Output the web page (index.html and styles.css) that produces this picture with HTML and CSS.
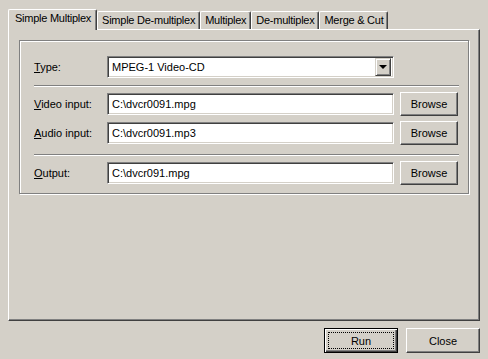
FILE: index.html
```html
<!DOCTYPE html>
<html lang="en">
<head>
  <meta charset="UTF-8">
  <title>Simple Multiplex</title>
  <link rel="stylesheet" href="styles.css">
</head>
<body>
  <div class="dialog">
    <div class="tabs">
      <div class="tab active">Simple Multiplex</div>
      <div class="tab">Simple De-multiplex</div>
      <div class="tab">Multiplex</div>
      <div class="tab">De-multiplex</div>
      <div class="tab">Merge &amp; Cut</div>
    </div>

    <div class="panel">
      <div class="group">
        <div class="row">
          <label class="label"><u>T</u>ype:</label>
          <div class="combo">
            <span class="combo-text">MPEG-1 Video-CD</span>
            <span class="combo-btn"><span class="arrow"></span></span>
          </div>
        </div>

        <div class="separator sep-top"></div>

        <div class="row">
          <label class="label"><u>V</u>ideo input:</label>
          <div class="field">C:\dvcr0091.mpg</div>
          <button class="btn browse">Browse</button>
        </div>
        <div class="row row-gap">
          <label class="label"><u>A</u>udio input:</label>
          <div class="field">C:\dvcr0091.mp3</div>
          <button class="btn browse">Browse</button>
        </div>

        <div class="separator sep-mid"></div>

        <div class="row">
          <label class="label"><u>O</u>utput:</label>
          <div class="field">C:\dvcr091.mpg</div>
          <button class="btn browse">Browse</button>
        </div>
      </div>
    </div>

    <div class="footer">
      <button class="btn default"><span class="focus">Run</span></button>
      <button class="btn">Close</button>
    </div>
  </div>
</body>
</html>
```

FILE: styles.css
```css
:root {
  --face: #d4d0c8;
  --shadow: #808080;
  --dark: #404040;
  --light: #fff;
}

* {
  box-sizing: border-box;
}

body {
  margin: 0;
  width: 488px;
  height: 359px;
  background-color: var(--face);
  font-family: "Liberation Sans", Arial, sans-serif;
  font-size: 11px;
  color: #000;
  overflow: hidden;
}

.dialog {
  padding: 9px 8px 0 8px;
}

/* Tabs */
.tabs {
  display: flex;
  align-items: flex-end;
  height: 20px;
}

.tab {
  position: relative;
  height: 18px;
  padding: 2px 4px 0 4px;
  border-top: 1px solid var(--light);
  border-left: 1px solid var(--light);
  border-right: 1px solid var(--dark);
  border-radius: 2px 2px 0 0;
  box-shadow: inset -1px 0 0 var(--shadow);
  letter-spacing: -0.25px;
  white-space: nowrap;
}

.tab.active {
  height: 21px;
  margin-bottom: -1px;
  padding: 2px 5px 0 6px;
  background-color: var(--face);
  z-index: 1;
}

/* Tab page */
.panel {
  height: 292px;
  padding: 10px 10px 0 10px;
  border: 1px solid;
  border-color: var(--light) var(--dark) var(--dark) var(--light);
  box-shadow: inset -1px -1px 0 var(--shadow);
}

.group {
  height: 154px;
  padding: 14px 9px 0 14px;
  border: 1px solid var(--shadow);
  box-shadow: inset 1px 1px 0 var(--light), 1px 1px 0 var(--light);
}

.row {
  display: flex;
  align-items: center;
  height: 23px;
}

.row-gap {
  margin-top: 6px;
}

.label {
  width: 73px;
}

.separator {
  height: 2px;
  border-top: 1px solid var(--shadow);
  border-bottom: 1px solid var(--light);
}

.sep-top {
  margin: 7px 0 5px 0;
}

.sep-mid {
  margin: 10px 0 5px 0;
}

/* Sunken boxes */
.field,
.combo {
  height: 22px;
  width: 287px;
  padding: 0 4px;
  display: flex;
  align-items: center;
  background-color: #fff;
  border: 1px solid;
  border-color: var(--shadow) var(--light) var(--light) var(--shadow);
  box-shadow: inset 1px 1px 0 var(--dark), inset -1px -1px 0 var(--face);
  white-space: nowrap;
}

.combo {
  padding-right: 2px;
  justify-content: space-between;
}

.combo-btn {
  display: flex;
  align-items: center;
  justify-content: center;
  width: 16px;
  height: 18px;
  background-color: var(--face);
  border: 1px solid;
  border-color: var(--face) var(--dark) var(--dark) var(--face);
  box-shadow: inset 1px 1px 0 var(--light), inset -1px -1px 0 var(--shadow);
}

.arrow {
  width: 0;
  height: 0;
  border-left: 4px solid transparent;
  border-right: 4px solid transparent;
  border-top: 4px solid #000;
}

/* Buttons */
.btn {
  font-family: inherit;
  font-size: 11px;
  color: #000;
  background-color: var(--face);
  border: 1px solid;
  border-color: var(--light) var(--dark) var(--dark) var(--light);
  box-shadow: inset -1px -1px 0 var(--shadow);
  padding: 0;
  width: 74px;
  height: 25px;
}

.browse {
  width: 58px;
  height: 24px;
  margin-left: 6px;
}

.footer {
  display: flex;
  justify-content: flex-end;
  gap: 8px;
  margin-top: 7px;
}

.btn.default {
  border: 1px solid #000;
  box-shadow: inset 1px 1px 0 var(--light), inset -1px -1px 0 var(--dark), inset -2px -2px 0 var(--shadow);
  padding: 3px;
}

.focus {
  display: flex;
  align-items: center;
  justify-content: center;
  height: 100%;
  border: 1px dotted #000;
}
```
